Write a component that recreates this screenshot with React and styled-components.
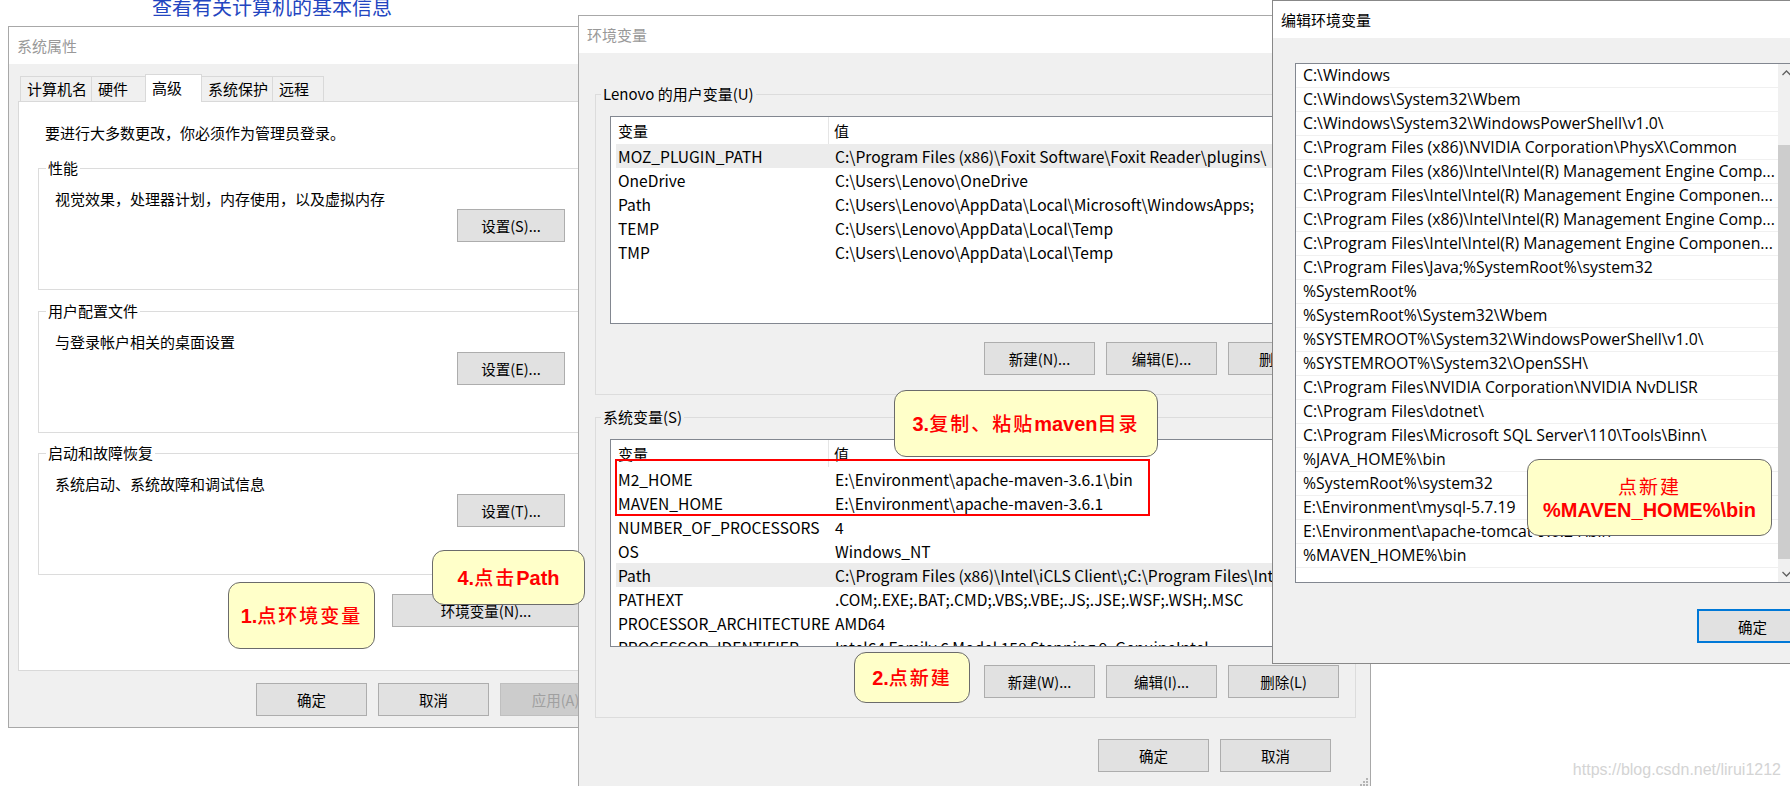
import React from "react";
import styled, { createGlobalStyle } from "styled-components";

const CJK = `"Noto Sans CJK SC", "Microsoft YaHei", sans-serif`;
const SEGOE = `"Open Sans", "Noto Sans", sans-serif`;

const GlobalStyle = createGlobalStyle`
  html, body {
    margin: 0;
    padding: 0;
    background: #fff;
    overflow: hidden;
  }
  body {
    font-family: ${CJK};
  }
`;

const Desktop = styled.div`
  position: relative;
  width: 1790px;
  height: 786px;
  overflow: hidden;
  background: #fff;
`;

const PageHeading = styled.div`
  position: absolute;
  left: 152px;
  top: -7px;
  font-size: 20px;
  line-height: 28px;
  color: #2346c0;
`;

// windows sit on a free canvas, so they are placed by coordinates
const Window = styled.div`
  position: absolute;
  left: ${(p) => p.$x}px;
  top: ${(p) => p.$y}px;
  width: ${(p) => p.$w}px;
  height: ${(p) => p.$h}px;
  z-index: ${(p) => p.$z};
  box-sizing: border-box;
  border: 1px solid ${(p) => (p.$active ? "#888" : "#a8a8a8")};
  background: #f0f0f0;
  display: flex;
  flex-direction: column;
`;

const TitleBar = styled.div`
  flex: none;
  height: 37px;
  background: #fff;
  display: flex;
  align-items: center;
  padding-left: 8px;
  font-size: 15px;
  color: ${(p) => (p.$active ? "#000" : "#999")};
`;

const Button = styled.button`
  flex: none;
  width: ${(p) => p.$w || 111}px;
  height: ${(p) => (p.$focus ? 34 : 33)}px;
  box-sizing: border-box;
  padding: 0;
  background: ${(p) => (p.$disabled ? "#cccccc" : "#e1e1e1")};
  border: ${(p) =>
    p.$focus ? "2px solid #0078d7" : `1px solid ${p.$disabled ? "#bfbfbf" : "#adadad"}`};
  color: ${(p) => (p.$disabled ? "#a0a0a0" : "#000")};
  font-family: ${CJK};
  font-size: 14.5px;
  white-space: nowrap;
  overflow: hidden;
`;

const ButtonRow = styled.div`
  display: flex;
  justify-content: flex-end;
  gap: 11px;
  margin-top: ${(p) => p.$top || 0}px;
  margin-right: ${(p) => p.$right || 0}px;
`;

/* ---------- group box ---------- */

const Group = styled.fieldset`
  margin: ${(p) => p.$gap || 0}px 0 0 0;
  padding: ${(p) => p.$pad};
  height: ${(p) => p.$h}px;
  box-sizing: border-box;
  border: 1px solid #dcdcdc;
  display: flex;
  flex-direction: column;
  min-width: 0;
`;

const Legend = styled.legend`
  margin-left: -9px;
  padding: 0 2px;
  font-size: 15px;
  line-height: 20px;
  color: #000;
`;

/* ---------- 系统属性 ---------- */

const SysBody = styled.div`
  flex: 1;
  display: flex;
  flex-direction: column;
  padding: 10px 9px 0 9px;
`;

const TabRow = styled.div`
  position: relative;
  z-index: 1;
  display: flex;
  align-items: flex-end;
  height: 28px;
  margin: 0 0 -1px 2px;
`;

const Tab = styled.div`
  box-sizing: border-box;
  width: ${(p) => p.$w}px;
  height: ${(p) => (p.$active ? 28 : 25)}px;
  margin-bottom: ${(p) => (p.$active ? 0 : 1)}px;
  padding: ${(p) => (p.$active ? "2px" : "1px")} 0 0 6px;
  border: 1px solid #d9d9d9;
  border-bottom: none;
  margin-right: -1px;
  background: ${(p) => (p.$active ? "#fff" : "#f0f0f0")};
  font-size: 15px;
  line-height: 21px;
  color: #000;
`;

const TabPanel = styled.div`
  height: 570px;
  box-sizing: border-box;
  background: #fff;
  border: 1px solid #d9d9d9;
  padding: 21px 31px 0 19px;
  display: flex;
  flex-direction: column;
`;

const Intro = styled.div`
  margin-left: 7px;
  font-size: 15px;
  line-height: 20px;
`;

const Desc = styled.div`
  font-size: 15px;
  line-height: 20px;
`;

const GroupButtons = styled.div`
  margin-top: auto;
  display: flex;
  justify-content: flex-end;
`;

/* ---------- 环境变量 ---------- */

const EnvBody = styled.div`
  flex: 1;
  display: flex;
  flex-direction: column;
  padding: 31px 14px 0 16px;
`;

const VarList = styled.div`
  height: 208px;
  flex: none;
  box-sizing: border-box;
  border: 1px solid #828790;
  background: #fff;
  padding-left: 5px;
  overflow: hidden;
`;

const VarHead = styled.div`
  display: flex;
  height: 27px;
  align-items: stretch;
  font-size: 15px;
`;

const HeadCell = styled.div`
  display: flex;
  align-items: center;
  box-sizing: border-box;
  width: ${(p) => (p.$name ? "213px" : "auto")};
  padding-left: ${(p) => (p.$name ? 2 : 5)}px;
  border-right: ${(p) => (p.$name ? "1px solid #e5e5e5" : "none")};
`;

const VarRow = styled.div`
  display: flex;
  align-items: center;
  height: 24px;
  background: ${(p) => (p.$selected ? "#ececec" : "transparent")};
  font-size: 15.6px;
  color: #000;
  white-space: nowrap;
`;

const VarName = styled.span`
  flex: none;
  box-sizing: border-box;
  width: 219px;
  padding-left: 2px;
  overflow: hidden;
`;

const VarValue = styled.span`
  white-space: nowrap;
`;

const Grip = styled.svg`
  position: absolute;
  right: 2px;
  bottom: 1px;
`;

/* ---------- 编辑环境变量 ---------- */

const EditBody = styled.div`
  flex: 1;
  display: flex;
  flex-direction: column;
  padding: 25px 0 0 22px;
`;

const PathList = styled.div`
  width: 501px;
  height: 520px;
  box-sizing: border-box;
  border: 1px solid #828790;
  background: #fff;
  display: flex;
`;

const PathItems = styled.div`
  flex: 1;
  min-width: 0;
`;

const PathItem = styled.div`
  height: 24px;
  box-sizing: border-box;
  border-bottom: 1px solid #f0f0f0;
  padding-left: 7px;
  font-family: ${SEGOE};
  font-size: 15.8px;
  line-height: 23px;
  color: #000;
  white-space: nowrap;
  overflow: hidden;
`;

const ScrollBar = styled.div`
  width: 17px;
  flex: none;
  background: #f0f0f0;
  display: flex;
  flex-direction: column;
`;

const ScrollArrow = styled.div`
  height: 17px;
  flex: none;
  display: flex;
  align-items: center;
  justify-content: center;
`;

const ScrollTrack = styled.div`
  flex: 1;
  padding-top: 64px;
`;

const ScrollThumb = styled.div`
  height: 414px;
  background: #cdcdcd;
`;

/* ---------- annotations ---------- */

const Callout = styled.div`
  position: absolute;
  left: ${(p) => p.$x}px;
  top: ${(p) => p.$y}px;
  width: ${(p) => p.$w}px;
  height: ${(p) => p.$h}px;
  z-index: 10;
  box-sizing: border-box;
  background: #ffffc9;
  border: 1px solid #6b6b6b;
  border-radius: 12px;
  display: flex;
  flex-direction: column;
  align-items: center;
  justify-content: center;
  color: #ff0000;
  white-space: nowrap;
`;

const CalloutLine = styled.div`
  line-height: 23px;
`;

const Bold = styled.span`
  font-family: "Liberation Sans", Arial, sans-serif;
  font-weight: 700;
  font-size: 20px;
`;

const Han = styled.span`
  font-family: ${CJK};
  font-weight: ${(p) => (p.$light ? 400 : 500)};
  font-size: 19px;
  letter-spacing: 2px;
`;

const Highlight = styled.div`
  position: absolute;
  left: 615px;
  top: 459px;
  width: 535px;
  height: 57px;
  box-sizing: border-box;
  border: 2px solid #ff0000;
  z-index: 9;
`;

const Watermark = styled.div`
  position: absolute;
  right: 9px;
  bottom: 7px;
  z-index: 11;
  font-family: "Liberation Sans", Arial, sans-serif;
  font-size: 16px;
  color: #d4d4d4;
`;

/* ---------- data ---------- */

const tabs = [
  { label: "计算机名", w: 72 },
  { label: "硬件", w: 55 },
  { label: "高级", w: 57, active: true },
  { label: "系统保护", w: 72 },
  { label: "远程", w: 52 },
];

const groups = [
  { title: "性能", desc: "视觉效果，处理器计划，内存使用，以及虚拟内存", btn: "设置(S)...", gap: 15 },
  { title: "用户配置文件", desc: "与登录帐户相关的桌面设置", btn: "设置(E)...", gap: 11 },
  { title: "启动和故障恢复", desc: "系统启动、系统故障和调试信息", btn: "设置(T)...", gap: 10 },
];

const userVars = [
  ["MOZ_PLUGIN_PATH", "C:\\Program Files (x86)\\Foxit Software\\Foxit Reader\\plugins\\", true],
  ["OneDrive", "C:\\Users\\Lenovo\\OneDrive"],
  ["Path", "C:\\Users\\Lenovo\\AppData\\Local\\Microsoft\\WindowsApps;"],
  ["TEMP", "C:\\Users\\Lenovo\\AppData\\Local\\Temp"],
  ["TMP", "C:\\Users\\Lenovo\\AppData\\Local\\Temp"],
];

const sysVars = [
  ["M2_HOME", "E:\\Environment\\apache-maven-3.6.1\\bin"],
  ["MAVEN_HOME", "E:\\Environment\\apache-maven-3.6.1"],
  ["NUMBER_OF_PROCESSORS", "4"],
  ["OS", "Windows_NT"],
  ["Path", "C:\\Program Files (x86)\\Intel\\iCLS Client\\;C:\\Program Files\\Intel\\iCLS Client\\;", true],
  ["PATHEXT", ".COM;.EXE;.BAT;.CMD;.VBS;.VBE;.JS;.JSE;.WSF;.WSH;.MSC"],
  ["PROCESSOR_ARCHITECTURE", "AMD64"],
  ["PROCESSOR_IDENTIFIER", "Intel64 Family 6 Model 158 Stepping 9, GenuineIntel"],
];

const paths = [
  "C:\\Windows",
  "C:\\Windows\\System32\\Wbem",
  "C:\\Windows\\System32\\WindowsPowerShell\\v1.0\\",
  "C:\\Program Files (x86)\\NVIDIA Corporation\\PhysX\\Common",
  "C:\\Program Files (x86)\\Intel\\Intel(R) Management Engine Comp...",
  "C:\\Program Files\\Intel\\Intel(R) Management Engine Componen...",
  "C:\\Program Files (x86)\\Intel\\Intel(R) Management Engine Comp...",
  "C:\\Program Files\\Intel\\Intel(R) Management Engine Componen...",
  "C:\\Program Files\\Java;%SystemRoot%\\system32",
  "%SystemRoot%",
  "%SystemRoot%\\System32\\Wbem",
  "%SYSTEMROOT%\\System32\\WindowsPowerShell\\v1.0\\",
  "%SYSTEMROOT%\\System32\\OpenSSH\\",
  "C:\\Program Files\\NVIDIA Corporation\\NVIDIA NvDLISR",
  "C:\\Program Files\\dotnet\\",
  "C:\\Program Files\\Microsoft SQL Server\\110\\Tools\\Binn\\",
  "%JAVA_HOME%\\bin",
  "%SystemRoot%\\system32",
  "E:\\Environment\\mysql-5.7.19",
  "E:\\Environment\\apache-tomcat-9.0.24\\bin",
  "%MAVEN_HOME%\\bin",
];

/* ---------- parts ---------- */

const VariableTable = ({ rows }) => (
  <VarList>
    <VarHead>
      <HeadCell $name>变量</HeadCell>
      <HeadCell>值</HeadCell>
    </VarHead>
    {rows.map(([name, value, selected]) => (
      <VarRow key={name} $selected={selected}>
        <VarName>{name}</VarName>
        <VarValue>{value}</VarValue>
      </VarRow>
    ))}
  </VarList>
);

const Chevron = ({ up }) => (
  <svg width="9" height="6" viewBox="0 0 9 6">
    <polyline
      points={up ? "0.5,5 4.5,1 8.5,5" : "0.5,1 4.5,5 8.5,1"}
      fill="none"
      stroke="#606060"
      strokeWidth="1.3"
    />
  </svg>
);

const SystemProperties = () => (
  <Window $x={8} $y={26} $w={614} $h={702} $z={1}>
    <TitleBar>系统属性</TitleBar>
    <SysBody>
      <TabRow>
        {tabs.map((t) => (
          <Tab key={t.label} $w={t.w} $active={t.active}>
            {t.label}
          </Tab>
        ))}
      </TabRow>
      <TabPanel>
        <Intro>要进行大多数更改，你必须作为管理员登录。</Intro>
        {groups.map((g) => (
          <Group key={g.title} $gap={g.gap} $h={132} $pad="11px 14px 17px 16px">
            <Legend>{g.title}</Legend>
            <Desc>{g.desc}</Desc>
            <GroupButtons>
              <Button $w={108}>{g.btn}</Button>
            </GroupButtons>
          </Group>
        ))}
        <ButtonRow $top={19}>
          <Button $w={188}>环境变量(N)...</Button>
        </ButtonRow>
      </TabPanel>
      <ButtonRow $top={12} $right={1}>
        <Button>确定</Button>
        <Button>取消</Button>
        <Button $disabled>应用(A)</Button>
      </ButtonRow>
    </SysBody>
  </Window>
);

const EnvironmentVariables = () => (
  <Window $x={578} $y={15} $w={793} $h={773} $z={2}>
    <TitleBar>环境变量</TitleBar>
    <EnvBody>
      <Group $h={311} $pad="12px 14px 19px 14px">
        <Legend>Lenovo 的用户变量(U)</Legend>
        <VariableTable rows={userVars} />
        <ButtonRow $top={18} $right={2}>
          <Button>新建(N)...</Button>
          <Button>编辑(E)...</Button>
          <Button>删除(D)</Button>
        </ButtonRow>
      </Group>
      <Group $gap={12} $h={311} $pad="12px 14px 19px 14px">
        <Legend>系统变量(S)</Legend>
        <VariableTable rows={sysVars} />
        <ButtonRow $top={18} $right={2}>
          <Button>新建(W)...</Button>
          <Button>编辑(I)...</Button>
          <Button>删除(L)</Button>
        </ButtonRow>
      </Group>
      <ButtonRow $top={21} $right={25}>
        <Button>确定</Button>
        <Button>取消</Button>
      </ButtonRow>
    </EnvBody>
    <Grip width="8" height="8" viewBox="0 0 8 8">
      <rect x="6" y="0" width="2" height="2" fill="#b4b4b4" />
      <rect x="3" y="3" width="2" height="2" fill="#b4b4b4" />
      <rect x="6" y="3" width="2" height="2" fill="#b4b4b4" />
      <rect x="0" y="6" width="2" height="2" fill="#b4b4b4" />
      <rect x="3" y="6" width="2" height="2" fill="#b4b4b4" />
      <rect x="6" y="6" width="2" height="2" fill="#b4b4b4" />
    </Grip>
  </Window>
);

const EditEnvironmentVariable = () => (
  <Window $x={1272} $y={0} $w={670} $h={664} $z={3} $active>
    <TitleBar $active>编辑环境变量</TitleBar>
    <EditBody>
      <PathList>
        <PathItems>
          {paths.map((p, i) => (
            <PathItem key={i}>{p}</PathItem>
          ))}
        </PathItems>
        <ScrollBar>
          <ScrollArrow>
            <Chevron up />
          </ScrollArrow>
          <ScrollTrack>
            <ScrollThumb />
          </ScrollTrack>
          <ScrollArrow>
            <Chevron />
          </ScrollArrow>
        </ScrollBar>
      </PathList>
      <ButtonRow $top={26} $right={11}>
        <Button $focus>确定</Button>
        <Button>取消</Button>
      </ButtonRow>
    </EditBody>
  </Window>
);

export default function App() {
  return (
    <Desktop>
      <GlobalStyle />
      <PageHeading>查看有关计算机的基本信息</PageHeading>
      <SystemProperties />
      <EnvironmentVariables />
      <EditEnvironmentVariable />

      <Highlight />

      <Callout $x={228} $y={582} $w={147} $h={67}>
        <CalloutLine>
          <Bold>1.</Bold>
          <Han>点环境变量</Han>
        </CalloutLine>
      </Callout>
      <Callout $x={432} $y={550} $w={153} $h={55}>
        <CalloutLine>
          <Bold>4.</Bold>
          <Han>点击</Han>
          <Bold>Path</Bold>
        </CalloutLine>
      </Callout>
      <Callout $x={894} $y={390} $w={264} $h={67}>
        <CalloutLine>
          <Bold>3.</Bold>
          <Han>复制、粘贴</Han>
          <Bold>maven</Bold>
          <Han>目录</Han>
        </CalloutLine>
      </Callout>
      <Callout $x={854} $y={652} $w={116} $h={51}>
        <CalloutLine>
          <Bold>2.</Bold>
          <Han>点新建</Han>
        </CalloutLine>
      </Callout>
      <Callout $x={1527} $y={459} $w={245} $h={77}>
        <CalloutLine>
          <Han $light>点新建</Han>
        </CalloutLine>
        <CalloutLine>
          <Bold>%MAVEN_HOME%\bin</Bold>
        </CalloutLine>
      </Callout>

      <Watermark>https://blog.csdn.net/lirui1212</Watermark>
    </Desktop>
  );
}
